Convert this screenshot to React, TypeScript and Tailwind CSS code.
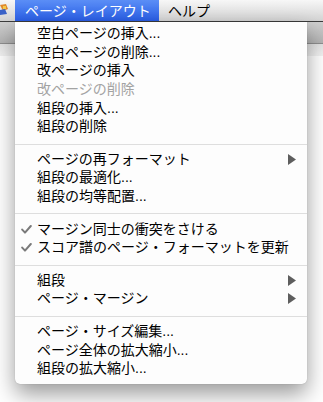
import React from "react";

const FONT = "[font-family:'Liberation_Sans','Noto_Sans_CJK_JP',sans-serif]";

type Item =
  | { type: "item"; label: string; dots?: boolean; disabled?: boolean; checked?: boolean; sub?: boolean }
  | { type: "sep" };

const items: Item[] = [
  { type: "item", label: "空白ページの挿入", dots: true },
  { type: "item", label: "空白ページの削除", dots: true },
  { type: "item", label: "改ページの挿入" },
  { type: "item", label: "改ページの削除", disabled: true },
  { type: "item", label: "組段の挿入", dots: true },
  { type: "item", label: "組段の削除" },
  { type: "sep" },
  { type: "item", label: "ページの再フォーマット", sub: true },
  { type: "item", label: "組段の最適化", dots: true },
  { type: "item", label: "組段の均等配置", dots: true },
  { type: "sep" },
  { type: "item", label: "マージン同士の衝突をさける", checked: true },
  { type: "item", label: "スコア譜のページ・フォーマットを更新", checked: true },
  { type: "sep" },
  { type: "item", label: "組段", sub: true },
  { type: "item", label: "ページ・マージン", sub: true },
  { type: "sep" },
  { type: "item", label: "ページ・サイズ編集", dots: true },
  { type: "item", label: "ページ全体の拡大縮小", dots: true },
  { type: "item", label: "組段の拡大縮小", dots: true },
];

function Check() {
  return (
    <svg width="11" height="9" viewBox="0 0 11 9" className="absolute left-[6px] top-[5.5px]">
      <path d="M1.2 4.6 L4 7.6 L9.8 1" fill="none" stroke="#7a7a7a" strokeWidth="2" strokeLinecap="round" strokeLinejoin="round" />
    </svg>
  );
}

function Arrow() {
  return (
    <svg width="8" height="11" viewBox="0 0 8 11" className="absolute right-[11px] top-[4px]">
      <path d="M0 0 L8 5.5 L0 11 Z" fill="#5e5e5e" />
    </svg>
  );
}

export default function App() {
  return (
    <div className={`relative w-[323px] h-[402px] overflow-hidden bg-white ${FONT} text-[14px]`}>
      {/* menu bar */}
      <div className="flex h-[22px] items-stretch border-b border-[#3c3c3c] bg-gradient-to-b from-[#f7f7f7] to-[#d3d3d3]">
        <div className="w-[15px] flex items-start pt-[3px]">
          <svg width="9" height="13" viewBox="0 0 9 13">
            <path d="M0 2 L6 1 L8 6 L3 8 Z" fill="#e08a2c" />
            <path d="M0 7 L5 6 L7 11 L0 12 Z" fill="#3a62c8" />
            <path d="M3 3 L6 3 L6 6 L3 6 Z" fill="#f4c84a" />
          </svg>
        </div>
        <div className="w-[144px] pl-[10px] flex items-center bg-gradient-to-b from-[#5b8ef6] to-[#2a5de6] text-white leading-none">
          ページ・レイアウト
        </div>
        <div className="pl-[9px] flex items-center text-black leading-none">ヘルプ</div>
      </div>
      {/* toolbar behind */}
      <div className="h-[22px] border-b border-[#8e8e8e] bg-gradient-to-b from-[#cfcfcf] to-[#b3b3b3]" />
      <div className="h-[12px] bg-gradient-to-b from-[#e2e2e2] to-[#f2f2f2]" />

      {/* dropdown menu */}
      <div className="absolute left-[15px] top-[22px] w-[292px] rounded-b-[5px] bg-[#fdfdfd] pt-[2px] pb-[6px] shadow-[0_10px_22px_rgba(0,0,0,0.4),0_0_1px_rgba(0,0,0,0.3)]">
        {items.map((it, i) =>
          it.type === "sep" ? (
            <div key={i} className="h-[14px] pt-[8px]">
              <div className="h-px w-full bg-[#dedede]" />
            </div>
          ) : (
            <div
              key={i}
              className={`relative h-[18.6px] pl-[22px] flex items-center whitespace-nowrap leading-none ${
                it.disabled ? "text-[#a3a3a3]" : "text-black"
              }`}
            >
              {it.checked && <Check />}
              <span>
                {it.label}
                {it.dots && "..."}
              </span>
              {it.sub && <Arrow />}
            </div>
          )
        )}
      </div>
    </div>
  );
}
